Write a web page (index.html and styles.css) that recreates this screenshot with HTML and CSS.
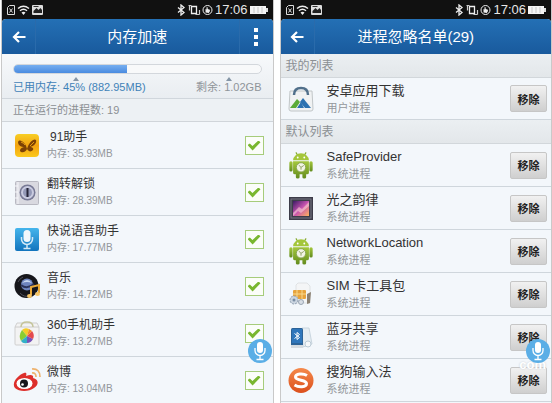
FILE: index.html
```html
<!DOCTYPE html>
<html lang="zh-CN">

<head>
    <meta charset="UTF-8">
    <meta name="viewport" content="width=device-width, initial-scale=1.0">
    <title>内存加速</title>
    <link rel="stylesheet" href="styles.css">
</head>

<body>
    <!-- shared icons -->
    <svg class="sprite" aria-hidden="true">
        <defs>
            <linearGradient id="gold" x1="0" y1="0" x2="0" y2="1">
                <stop offset="0" stop-color="#f8cf25" />
                <stop offset="0.5" stop-color="#f3a311" />
                <stop offset="1" stop-color="#fbc91c" />
            </linearGradient>
            <linearGradient id="sky" x1="0" y1="0" x2="0" y2="1">
                <stop offset="0" stop-color="#45b5ec" />
                <stop offset="1" stop-color="#1274bd" />
            </linearGradient>
            <linearGradient id="green" x1="0" y1="0" x2="0" y2="1">
                <stop offset="0" stop-color="#a5c83c" />
                <stop offset="1" stop-color="#628b1e" />
            </linearGradient>
            <linearGradient id="photo" x1="0" y1="0" x2="1" y2="1">
                <stop offset="0" stop-color="#3b1b63" />
                <stop offset="0.5" stop-color="#c653b0" />
                <stop offset="1" stop-color="#ffb25c" />
            </linearGradient>
            <linearGradient id="orange" x1="0" y1="0" x2="0" y2="1">
                <stop offset="0" stop-color="#f58a4c" />
                <stop offset="1" stop-color="#db4f1c" />
            </linearGradient>
        </defs>
        <symbol id="i-status" viewBox="0 0 37 12">
            <path d="M2.500 1.500h5l0 9h-7v-7z" fill="none" stroke="#ddd" />
            <path d="M2.500 4.500l3 4M5.500 4.500l-3 4" stroke="#ddd" />
            <path d="M11 4.500q5.500-4.500 11 0M13 6.700q3.500-3 7 0" fill="none" stroke="#eee" stroke-width="1.400" />
            <path d="M14.500 8.500q2-1.500 4 0l-2 2.500z" fill="#eee" />
            <rect x="25" y="1" width="11" height="10" rx="1" fill="#ddd" />
            <path d="M26.500 9V7l3-3 2 2 2-2 1.500 2v3z" fill="#222" />
            <path d="M26.500 2.500h5" stroke="#333" />
        </symbol>
        <symbol id="i-signals" viewBox="0 0 36 12">
            <path d="M1 3.500l6 5L4 11V1l3 2.500-6 5" fill="none" stroke="#eee" stroke-width="1.300" />
            <path d="M14.500 2.500h5v7h-5z" fill="none" stroke="#eee" stroke-width="1.300" />
            <path d="M11.500 1.500h3M12.500 1.500v5M22.500 6v4.500M18.500 10.500h4" stroke="#ccc" stroke-width="1.200" />
            <circle cx="30.500" cy="6" r="4.500" fill="none" stroke="#eee" />
            <path d="M28.500 8.500V5l1 .5V3.200h1.200V5l2.200.7v1.500L31.800 9z" fill="#eee" />
        </symbol>
        <symbol id="i-battery" viewBox="0 0 18 10">
            <rect x="0" y="1" width="16" height="8" fill="#f4f4f4" />
            <rect x="16" y="3" width="2" height="4" fill="#ddd" />
            <path d="M4 2v6M8 2v6M12 2v6" stroke="#aaa" stroke-width=".6" />
        </symbol>
        <symbol id="i-back" viewBox="0 0 14 12">
            <path d="M13.500 6H2M7 1L2 6l5 5" fill="none" stroke="#fff" stroke-width="2.200" />
        </symbol>
        <symbol id="i-mic" viewBox="0 0 24 24">
            <rect x="9" y="3" width="6" height="11" rx="3" fill="#fff" />
            <path d="M7 9v2.500a5 5 0 0 0 10 0V9M12 16.500V20M8.500 20.500h7" fill="none" stroke="#fff" stroke-width="1.300" />
        </symbol>
        <symbol id="i-android" viewBox="0 0 28 30">
            <path d="M8.500 1.500l2.500 4M19.500 1.500l-2.500 4" stroke="#86aa2e" stroke-width="1.200" />
            <path d="M5.500 10a8.500 7.500 0 0 1 17 0z" fill="#a4c63b" />
            <circle cx="10.500" cy="7" r="1" fill="#fff" />
            <circle cx="17.500" cy="7" r="1" fill="#fff" />
            <rect x="1.500" y="11" width="3.500" height="11" rx="1.700" fill="url(#green)" />
            <rect x="23" y="11" width="3.500" height="11" rx="1.700" fill="url(#green)" />
            <path d="M5.500 11h17v12q0 2-2 2h-1v3q0 1.500-2 1.500t-2-1.500v-3h-3v3q0 1.500-2 1.500t-2-1.500v-3h-1q-2 0-2-2z" fill="url(#green)" />
            <circle cx="14" cy="17.500" r="5" fill="#f2f4e4" stroke="#88a551" />
            <path d="M11.500 15l2.500 2.500 3-2M14 17.500V20" fill="none" stroke="#8a9c5d" />
        </symbol>
    </svg>

    <main class="screens">
        <section class="phone">
            <div class="status-bar">
                <svg class="status-left"><use href="#i-status" /></svg>
                <svg class="status-right"><use href="#i-signals" /></svg>
                <span class="time">17:06</span>
                <svg class="battery"><use href="#i-battery" /></svg>
            </div>
            <header class="title-bar">
                <button class="nav-button" aria-label="返回"><svg class="back"><use href="#i-back" /></svg></button>
                <h1>内存加速</h1>
                <button class="nav-button menu" aria-label="菜单">
                    <svg class="dots" viewBox="0 0 4 18"><path d="M0 0h4v4H0zM0 7h4v4H0zM0 14h4v4H0z" fill="#fff" /></svg>
                </button>
            </header>
            <div class="memory">
                <div class="bar"><div class="bar-used" style="width: 45.800%"></div></div>
                <div class="memory-labels">
                    <span class="used">已用内存: 45% (882.95MB)</span>
                    <span class="free">剩余: 1.02GB</span>
                </div>
            </div>
            <div class="count">正在运行的进程数: 19</div>
            <ul class="list processes">
                <li>
                    <svg class="app-icon" viewBox="0 0 28 28">
                        <rect x="2" y="3" width="24" height="23" rx="4" fill="url(#gold)" />
                        <path d="M14 18C13 11 6 7 5 11c0 4 4 5 6 5-4 1-5 4-3 5 3 1 5-1 6-3 2 3 4 3 6 1 1-2-1-3-3-3 4-1 7-4 6-7-2-2-7 2-9 9z" fill="#7d4205" />
                        <path d="M8 11q3 1 4 3M21 11l-4 4" stroke="#e79e13" fill="none" />
                    </svg>
                    <label class="info" for="p1"><span class="name indent">91助手</span><span class="detail">内存: 35.93MB</span></label>
                    <input type="checkbox" id="p1" checked>
                </li>
                <li>
                    <svg class="app-icon" viewBox="0 0 28 28">
                        <rect x="2.500" y="3.500" width="23" height="23" rx="1" fill="#d9d9e0" stroke="#b9b9c2" />
                        <path d="M5 4v22M2 8h3M2 14h3M2 20h3" stroke="#f6f6fa" />
                        <circle cx="14.500" cy="14.500" r="8" fill="#777995" />
                        <circle cx="14.500" cy="14.500" r="6.500" fill="#c9cbe0" />
                        <circle cx="14.500" cy="14.500" r="4.500" fill="#9499b7" />
                        <rect x="13.500" y="10" width="2" height="9" fill="#26263a" />
                    </svg>
                    <label class="info" for="p2"><span class="name">翻转解锁</span><span class="detail">内存: 28.39MB</span></label>
                    <input type="checkbox" id="p2" checked>
                </li>
                <li>
                    <svg class="app-icon" viewBox="0 0 28 28">
                        <rect x="2" y="3" width="24" height="23" rx="2" fill="url(#sky)" />
                        <rect x="10.500" y="5" width="7" height="12" rx="3.500" fill="#f2f8fc" />
                        <path d="M8.500 12v2a5.500 5.500 0 0 0 11 0v-2M14 19.500V23M10.500 23.500h7" fill="none" stroke="#d3e9f7" stroke-width="1.500" />
                    </svg>
                    <label class="info" for="p3"><span class="name">快说语音助手</span><span class="detail">内存: 17.77MB</span></label>
                    <input type="checkbox" id="p3" checked>
                </li>
                <li>
                    <svg class="app-icon" viewBox="0 0 28 28">
                        <circle cx="13.500" cy="14" r="12" fill="#16161b" />
                        <path d="M5 10a10 10 0 0 1 5-5M17 24a10 10 0 0 1-10-3" fill="none" stroke="#4d4d57" />
                        <circle cx="14" cy="12.500" r="6" fill="#6d83bd" />
                        <path d="M9 11q5-6 10 0-5-2-10 0z" fill="#c7d6ef" />
                        <path d="M8 13q6 5 13-1" stroke="#2b335b" stroke-width="2" fill="none" />
                        <path d="M18 23v-8l8-2v8" fill="none" stroke="#e9a938" stroke-width="2" />
                        <ellipse cx="16.500" cy="24" rx="2.500" ry="2" fill="#f4c465" />
                        <ellipse cx="24.500" cy="22" rx="2.500" ry="2" fill="#f4c465" />
                    </svg>
                    <label class="info" for="p4"><span class="name">音乐</span><span class="detail">内存: 14.72MB</span></label>
                    <input type="checkbox" id="p4" checked>
                </li>
                <li>
                    <svg class="app-icon" viewBox="0 0 28 28">
                        <path d="M4 4h20l2 4v17q0 1-1 1H3q-1 0-1-1V8z" fill="#f3f3f3" stroke="#cfcfcf" />
                        <path d="M2 8h24" stroke="#cccccc" />
                        <path d="M8 8q0-5 6-5t6 5" fill="none" stroke="#c4c49a" stroke-width="1.500" />
                        <path d="M14 17L9 11q3-3 7-1z" fill="#f6cb26" />
                        <path d="M14 17L8 22q-3-5 1-11z" fill="#8bcc31" />
                        <path d="M14 17v7q-4 1-6-2z" fill="#33b0c7" />
                        <path d="M14 17l6 3q-2 4-6 4z" fill="#7653b9" />
                        <path d="M14 17l5-5q3 4 1 8z" fill="#e44a4c" />
                        <path d="M14 17l2-7 3 2z" fill="#f58b2c" />
                    </svg>
                    <label class="info" for="p5"><span class="name">360手机助手</span><span class="detail">内存: 13.27MB</span></label>
                    <input type="checkbox" id="p5" checked>
                </li>
                <li>
                    <svg class="app-icon" viewBox="0 0 28 28">
                        <path d="M11 7c2-1 3 0 2 3 5-2 8-1 7 2 6 1 6 7 1 10-5 4-15 4-19 0-4-5 3-13 9-15z" fill="#dd2f2b" />
                        <ellipse cx="11.500" cy="17.500" rx="8" ry="5.500" fill="#fff" />
                        <circle cx="11" cy="17.500" r="4" fill="#17171b" />
                        <circle cx="9.500" cy="18.500" r="1.300" fill="#fff" />
                        <path d="M19 7q4-.5 4 4M19 3q8-.5 8 8" fill="none" stroke="#eeb26d" stroke-width="1.700" />
                    </svg>
                    <label class="info" for="p6"><span class="name">微博</span><span class="detail">内存: 13.04MB</span></label>
                    <input type="checkbox" id="p6" checked>
                </li>
            </ul>
            <button class="voice" aria-label="语音"><svg><use href="#i-mic" /></svg></button>
        </section>

        <section class="phone">
            <div class="status-bar">
                <svg class="status-left"><use href="#i-status" /></svg>
                <svg class="status-right"><use href="#i-signals" /></svg>
                <span class="time">17:06</span>
                <svg class="battery"><use href="#i-battery" /></svg>
            </div>
            <header class="title-bar">
                <button class="nav-button" aria-label="返回"><svg class="back"><use href="#i-back" /></svg></button>
                <h1>进程忽略名单(29)</h1>
                <span class="nav-space"></span>
            </header>
            <h2>我的列表</h2>
            <ul class="list ignored mine">
                <li>
                    <svg class="app-icon" viewBox="0 0 28 28">
                        <path d="M3 6h22l1 18q0 2-2 2H4q-2 0-2-2z" fill="#f0f2f3" stroke="#c1c6c8" />
                        <path d="M7 10q0-7 7-7t7 7" fill="none" stroke="#51708b" stroke-width="2.500" />
                        <path d="M3 23l7-9 3 3-4 6z" fill="#5cab38" />
                        <path d="M10 23l4-6 3 6z" fill="#2c72b1" />
                        <path d="M13 17l3-4 8 10h-6z" fill="#2c72b1" />
                    </svg>
                    <div class="info"><span class="name">安卓应用下载</span><span class="detail">用户进程</span></div>
                    <button class="remove">移除</button>
                </li>
            </ul>
            <h2>默认列表</h2>
            <ul class="list ignored">
                <li>
                    <svg class="app-icon"><use href="#i-android" /></svg>
                    <div class="info"><span class="name">SafeProvider</span><span class="detail">系统进程</span></div>
                    <button class="remove">移除</button>
                </li>
                <li>
                    <svg class="app-icon" viewBox="0 0 28 28">
                        <rect x="2" y="3" width="24" height="23" fill="#3d3c49" />
                        <rect x="4" y="5" width="20" height="19" fill="none" stroke="#777684" />
                        <rect x="6" y="7" width="16" height="15" fill="url(#photo)" />
                        <path d="M6 19l6-6 3 2 7-7v4l-8 7-3-2-5 5z" fill="#fbd0d4" opacity=".6" />
                    </svg>
                    <div class="info"><span class="name">光之韵律</span><span class="detail">系统进程</span></div>
                    <button class="remove">移除</button>
                </li>
                <li>
                    <svg class="app-icon"><use href="#i-android" /></svg>
                    <div class="info"><span class="name">NetworkLocation</span><span class="detail">系统进程</span></div>
                    <button class="remove">移除</button>
                </li>
                <li>
                    <svg class="app-icon" viewBox="0 0 28 28">
                        <path d="M11 3h9l3 3v17H9V5z" fill="#f4f5f6" stroke="#dfe2e4" />
                        <rect x="6" y="10" width="13" height="9" rx="1" fill="#e7a33c" />
                        <path d="M10 10v9M15 10v9M6 14h13" stroke="#f9d98c" />
                        <path d="M20 14l4-2-1 11-3 1z" fill="#8b8173" />
                        <circle cx="7" cy="20" r="4" fill="#cbd5e0" stroke="#91a0b2" stroke-dasharray="2 1" />
                        <circle cx="7" cy="20" r="1.500" fill="#7b8ea4" />
                        <circle cx="14" cy="22" r="2.500" fill="#d8dee5" stroke="#9ba7b5" />
                    </svg>
                    <div class="info"><span class="name">SIM 卡工具包</span><span class="detail">系统进程</span></div>
                    <button class="remove">移除</button>
                </li>
                <li>
                    <svg class="app-icon" viewBox="0 0 28 28">
                        <path d="M15 5h7l3 16-9 3z" fill="#e6edf2" stroke="#c9d6df" />
                        <rect x="4" y="5" width="12" height="20" rx="1.500" fill="#2d6397" />
                        <rect x="5" y="6" width="10" height="14" fill="#2f76bb" />
                        <path d="M7.500 10.500l5 4-2.500 2v-7l2.500 2-5 4" fill="none" stroke="#fff" />
                        <rect x="4" y="22" width="12" height="3" fill="#d5dbe0" />
                        <circle cx="21" cy="21" r="3" fill="#f6f8fa" stroke="#bccbd6" />
                    </svg>
                    <div class="info"><span class="name">蓝牙共享</span><span class="detail">系统进程</span></div>
                    <button class="remove">移除</button>
                </li>
                <li>
                    <svg class="app-icon" viewBox="0 0 28 28">
                        <circle cx="14" cy="14.500" r="12.500" fill="url(#orange)" />
                        <path d="M20 9.500C16 7 8.500 7.500 8.500 11c0 4 11 2.500 11 6.500 0 4-8 4-12 1.500" fill="none" stroke="#fff" stroke-width="3" />
                    </svg>
                    <div class="info"><span class="name">搜狗输入法</span><span class="detail">系统进程</span></div>
                    <button class="remove">移除</button>
                </li>
            </ul>
            <button class="voice" aria-label="语音"><svg><use href="#i-mic" /></svg></button>
            <div class="watermark">com</div>
        </section>
    </main>
</body>

</html>
```
FILE: styles.css
```css
* {
    box-sizing: border-box;
}

body {
    margin: 0;
    background: #fff;
    font-family: "Liberation Sans", "Noto Sans CJK SC", sans-serif;
}

button {
    border: 0;
    padding: 0;
    background: none;
    font-family: inherit;
}

svg {
    display: block;
    flex: none;
}

.sprite {
    position: absolute;
    width: 0;
    height: 0;
}

.screens {
    display: grid;
    grid-template-columns: 1fr 1fr;
    gap: 6px;
    padding-left: 1px;
    min-height: 100vh;
}

.phone {
    position: relative;
    border: solid #c9c9c9;
    border-width: 0 1px;
    background: #f3f7fb;
}

.status-bar {
    display: flex;
    align-items: center;
    height: 19px;
    padding: 0 5px;
    background: #111;
    color: #e6e6e6;
}

.status-left {
    width: 37px;
    height: 12px;
}

.status-right {
    width: 36px;
    height: 12px;
    margin-left: auto;
}

.time {
    margin: 0 2px;
    font-size: 13px;
    line-height: 19px;
}

.battery {
    width: 18px;
    height: 10px;
}

.title-bar {
    display: flex;
    height: 35px;
    border-radius: 4px 4px 0 0;
    background: linear-gradient(#2470b5, #195a9d);
    box-shadow: 0 -4px 0 #111;
}

.title-bar h1 {
    flex: 1;
    margin: 0;
    color: #fff;
    font-size: 15px;
    font-weight: 400;
    line-height: 35px;
    text-align: center;
}

.nav-button,
.nav-space {
    display: flex;
    align-items: center;
    justify-content: center;
    width: 34px;
}

.nav-button {
    border-right: 1px solid #2a6bab;
}

.nav-button.menu {
    border-right: 0;
    border-left: 1px solid #2a6bab;
}

.back {
    width: 14px;
    height: 12px;
}

.dots {
    width: 4px;
    height: 18px;
}

.memory {
    height: 45px;
    padding: 10px 11px 0;
    border-bottom: 1px solid #d0d6dc;
    background: linear-gradient(#f7f9fb, #e9edf1);
}

.bar {
    height: 10px;
    border: 1px solid #d3d7dc;
    border-radius: 5px;
    background: #f8f9fa;
    overflow: hidden;
}

.bar-used {
    height: 100%;
    background: linear-gradient(#76aef0, #4a8be0);
}

.memory-labels {
    display: flex;
    justify-content: space-between;
    font-size: 11px;
    line-height: 26px;
}

.used,
.free {
    position: relative;
}

.used {
    color: #4182b8;
}

.free {
    color: #8f9499;
}

.used::before,
.free::before {
    content: "";
    position: absolute;
    top: 3px;
    left: 45%;
    border: 3px solid transparent;
    border-top: 0;
    border-bottom: 4px solid #8495a6;
}

.count {
    height: 23px;
    padding-left: 11px;
    border-bottom: 1px solid #d0d5da;
    background: #edf1f4;
    color: #8b8f93;
    font-size: 11px;
    line-height: 22px;
}

.list {
    margin: 0;
    padding: 0;
    list-style: none;
}

.list li {
    display: flex;
    align-items: center;
    height: 47px;
    padding: 0 9px 0 11px;
    gap: 6px;
    border-bottom: 1px solid #cfd6dc;
}

.app-icon {
    width: 28px;
    height: 28px;
}

.info {
    display: flex;
    flex: 1;
    flex-direction: column;
}

.name {
    color: #333;
    font-size: 13px;
    line-height: 18px;
}

.processes .name {
    font-size: 12px;
}

.name.indent {
    padding-left: 3px;
}

.detail {
    color: #94989c;
    font-size: 11px;
    line-height: 16px;
}

.processes .detail {
    font-size: 10px;
}

input[type="checkbox"] {
    appearance: none;
    width: 19px;
    height: 19px;
    margin: 0;
    border: 1px solid #a6cc7b;
    background: #fbfdf9;
}

input[type="checkbox"]:checked::before {
    content: "";
    display: block;
    width: 13px;
    height: 10px;
    margin: 4px 2px;
    background: #79b72f;
    clip-path: polygon(0 45%, 18% 30%, 38% 55%, 84% 0, 100% 17%, 39% 100%);
}

h2 {
    height: 24px;
    margin: 0;
    padding-left: 5px;
    border-bottom: 1px solid #d2d7db;
    background: linear-gradient(#ebeff2, #e3e7ea);
    color: #8b8f93;
    font-size: 12px;
    font-weight: 400;
    line-height: 24px;
}

.ignored li {
    height: 43px;
    padding: 0 4px 0 6px;
    gap: 12px;
}

.mine li {
    height: 42px;
}

.remove {
    width: 37px;
    height: 27px;
    border: 1px solid #c6c6c6;
    border-radius: 2px;
    background: linear-gradient(#f1f1f1, #cfcfcf);
    color: #222;
    font-size: 11px;
    font-weight: 700;
}

.voice {
    position: absolute;
    right: 1px;
    top: 339px;
    z-index: 1;
    width: 24px;
    height: 24px;
    border-radius: 50%;
    background: #5aaee6;
}

.voice svg {
    width: 24px;
    height: 24px;
}

.watermark {
    position: absolute;
    right: 5px;
    top: 358px;
    color: #fff;
    font-size: 13px;
    font-weight: 700;
    line-height: 14px;
    text-shadow: 0 0 2px #c4c8cc;
    pointer-events: none;
}
```
